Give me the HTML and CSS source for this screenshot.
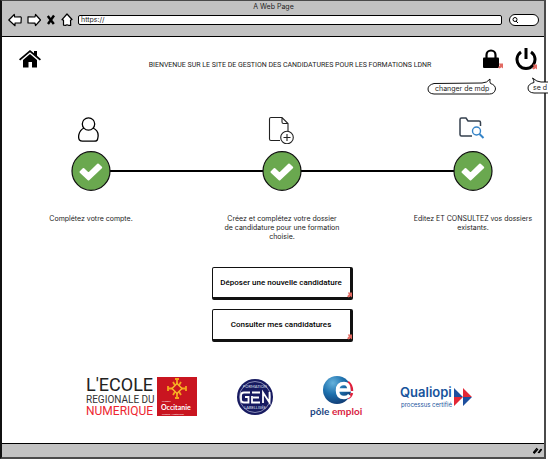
FILE: index.html
```html
<!DOCTYPE html>
<html lang="fr">
<head>
<meta charset="utf-8">
<title>A Web Page</title>
<link rel="stylesheet" href="styles.css">
</head>
<body>
<svg class="defs" aria-hidden="true">
  <symbol id="check" viewBox="0 0 40 40">
    <ellipse cx="20" cy="20" rx="19" ry="19.3" fill="#6aa84f" stroke="#111" stroke-width="1.2"/>
    <path d="M9.500 21l3-3 5 4.700L27 13.500l3.200 3L17.500 28.500z" fill="#fff" stroke="#fff" stroke-width="2" stroke-linejoin="round"/>
  </symbol>
  <symbol id="mark" viewBox="0 0 6 6">
    <path d="M1 0h5v6L4.300 4.500 2 6 0 4.500 2.200 2.300z" fill="#e26a62"/>
  </symbol>
</svg>
<div class="browser">
  <header class="chrome">
    <div class="chrome-title">A Web Page</div>
    <div class="toolbar">
      <button class="nav" aria-label="Précédent"><svg width="14" height="14" viewBox="0 0 14 14"><path d="M.8 7l5.500-5.500.4 2.500 6-.2.600 1-.3 5-6 .2v2.700z"/></svg></button>
      <button class="nav" aria-label="Suivant"><svg width="14" height="14" viewBox="0 0 14 14"><path d="M13.500 7L8.500 1.500 8 4 1 3.800V10l7 .2.500 2.500z"/></svg></button>
      <button class="nav stop" aria-label="Arrêter"><svg width="10" height="14" viewBox="0 0 10 14"><path d="M1.800 3l6 8M8 2.500L2 11"/></svg></button>
      <button class="nav" aria-label="Accueil du navigateur"><svg width="12" height="14" viewBox="0 0 12 14"><path d="M6 1l5 5.500-1.500.8.200 5H7.500L6 11.800l-1.500.6-2-.3v-5L1 6.700z"/></svg></button>
      <input class="address" type="text" aria-label="Adresse" value="https://">
      <label class="search"><svg width="8" height="8" viewBox="0 0 8 8"><circle cx="4" cy="3.500" r="2"/><path d="M5 5l2 2"/></svg><input type="text" aria-label="Rechercher"></label>
    </div>
  </header>

  <main>
    <div class="top">
      <a class="home" href="#" aria-label="Accueil"><svg width="22" height="18" viewBox="0 0 22 18"><path d="M11 4l7 6v7.500h-5V12H9.500v5.500H4V10z"/><path d="M0 9.200L11 0l4 3.300V1h3v4.800l4 3.400-1.200 1.300L11 2.300 1.200 10.500z"/></svg></a>
      <h1>BIENVENUE SUR LE SITE DE GESTION DES CANDIDATURES POUR LES FORMATIONS LDNR</h1>
      <nav class="account">
        <a class="action lock" href="#">
          <svg width="16" height="20" viewBox="0 0 16 20"><path d="M3.500 9V6a4.500 4.500 0 0 1 9 0v3" fill="none" stroke="#000" stroke-width="2.200"/><rect y="8.500" width="16" height="10.500" rx="1"/></svg>
          <svg class="mark" width="5" height="6"><use href="#mark"/></svg>
          <span class="callout"><svg width="70" height="18" viewBox="0 0 70 18"><path d="M7 5.500l48-.5q5 0 8-4-.4 3.500.5 4.500 5 1.500 5 5.500-1 5-6 5H7q-6-.5-6-5 0-4 6-5.500z"/></svg><span>changer de mdp</span></span>
        </a>
        <a class="action power" href="#">
          <svg width="22" height="22" viewBox="0 0 22 22"><path d="M6 4a9 9 0 1 0 10 0M11 0v11" fill="none" stroke="#000" stroke-width="3"/></svg>
          <svg class="mark" width="5" height="6"><use href="#mark"/></svg>
          <span class="callout"><svg width="21" height="18" viewBox="0 0 21 18"><path d="M7 5.500Q7 3 5.500 1 10 5 14 5h52v11H7q-6-.5-6-5 0-4 6-5.500z"/></svg><span>se d</span></span>
        </a>
      </nav>
    </div>

    <ol class="steps">
      <li>
        <svg class="picto" width="26" height="28" viewBox="0 0 26 28"><g fill="none" stroke="#000" stroke-width="1.300"><path d="M6 12C0 15 0 22 1.500 24q1 1.200 3 1.200h11.500q3 0 3.500-1.700Q22 15 15 12"/><circle cx="10.500" cy="8" r="6.200" fill="#fff"/></g></svg>
        <svg class="dot" width="40" height="40"><use href="#check"/></svg>
        <p>Complétez votre compte.</p>
      </li>
      <li>
        <svg class="picto" width="28" height="28" viewBox="0 0 28 28"><g fill="none" stroke="#222" stroke-width="1.100"><path d="M12 24.500H3q-1.500 0-1.500-1.500V3Q1.500 1.500 3 1.500h11l6 6V15M14 1.500V6q0 1.500 1.500 1.500H20"/><circle cx="19" cy="21.500" r="6.300" fill="#fff"/><path d="M19 18v7M15.500 21.500h7"/></g></svg>
        <svg class="dot" width="40" height="40"><use href="#check"/></svg>
        <p>Créez et complétez votre dossier<br>de candidature pour une formation<br>choisie.</p>
      </li>
      <li>
        <svg class="picto" width="30" height="28" viewBox="0 0 30 28"><path d="M14 20H3.500Q2 20 2 18.500v-15Q2 2 3.500 2H8l2 3h11q1.500 0 1.500 1.500V10" fill="none" stroke="#35404e" stroke-width="1.500"/><circle cx="18.500" cy="15" r="4" fill="#fff" stroke="#3584c8" stroke-width="1.400"/><path d="M21.500 18l4 4" stroke="#3584c8" stroke-width="2"/></svg>
        <svg class="dot" width="40" height="40"><use href="#check"/></svg>
        <p>Editez ET CONSULTEZ vos dossiers existants.</p>
      </li>
    </ol>

    <div class="buttons">
      <button>Déposer une nouvelle candidature<svg class="mark" width="5" height="6"><use href="#mark"/></svg></button>
      <button>Consulter mes candidatures<svg class="mark" width="5" height="6"><use href="#mark"/></svg></button>
    </div>

    <div class="logos">
      <svg width="114" height="44" viewBox="0 0 114 44" role="img" aria-label="L'Ecole Régionale du Numérique, Occitanie">
        <g font-family="Roboto, sans-serif">
          <text x="0" y="16" font-size="18" fill="#222">L'ECOLE</text>
          <text x="0" y="28" font-size="10" fill="#333">REGIONALE DU</text>
          <text x="0" y="40" font-size="12" fill="#ed2630">NUMERIQUE</text>
        </g>
        <rect x="71" y="2" width="40" height="39" fill="#c91520"/>
        <path d="M91 4v19M82 13.500h18M87 7l8 13M95 7l-8 13M89 4h4M89 23h4M82 11v5M100 11v5" stroke="#f5a51c" stroke-width="1.800"/>
        <path d="M91 8.500l5 5-5 5-5-5z" fill="#c91520" stroke="#f8b52a" stroke-width="1.500"/>
        <g fill="#fff" font-family="Lato, sans-serif"><text x="76" y="27" font-size="2">La Région</text><text x="75" y="35" font-size="7" font-weight="bold">Occitanie</text><text x="76" y="40" font-size="2">Pyrénées - Méditerranée</text></g>
      </svg>
      <svg width="38" height="44" viewBox="0 0 38 44" role="img" aria-label="Formation GEN labellisée">
        <circle cx="19" cy="22" r="18" fill="#171a60"/><circle cx="19" cy="22" r="15.500" fill="none" stroke="#b9bbd8" stroke-width=".7"/>
        <g fill="none" stroke="#fff" stroke-width="1.800"><path d="M14 17.500H8q-3 0-3 3v4q0 3 3 3h4.500V22H9M24 17.500h-8M17 22.500h6M24 27.500h-8V21M27 28V17.500l6.500 10V17"/></g>
        <g fill="#dfe0f0" font-family="Lato, sans-serif" font-size="4" text-anchor="middle"><text x="19" y="13">FORMATION</text><text x="19" y="34">LABELLISÉE</text></g>
      </svg>
      <svg width="54" height="44" viewBox="0 0 54 44" role="img" aria-label="pôle emploi">
        <defs><radialGradient id="ball" cx=".35" cy=".25" r=".8"><stop offset="0" stop-color="#65b2dc"/><stop offset=".5" stop-color="#1d70ad"/><stop offset="1" stop-color="#103a73"/></radialGradient></defs>
        <circle cx="27" cy="15" r="14" fill="url(#ball)"/>
        <path d="M38 7q4 3 4 9M42 18q-1 4-4 5" fill="none" stroke="#e0203b" stroke-width="2.500"/>
        <path d="M28 15h11Q39 8.500 34 8.500q-6.500 0-6.500 7t6.500 7q3.500 0 5.500-2.500" fill="none" stroke="#fff" stroke-width="3.500"/>
        <g font-family="Lato, sans-serif" font-size="10" font-weight="bold"><text x="0" y="40" fill="#1b4581">pôle</text><text x="22" y="40" fill="#d92342">emploi</text></g>
      </svg>
      <svg width="74" height="44" viewBox="0 0 74 44" role="img" aria-label="Qualiopi processus certifié">
        <g fill="#17549c"><text x="0" y="22" font-family="Inter, sans-serif" font-size="13" font-weight="600">Qualiopi</text><text x="1" y="32" font-family="Inter, sans-serif" font-size="6">processus certifié</text></g>
        <path d="M54 13l9 9h-9zM63 22v9l9-9z" fill="#1d4f9e"/><path d="M54 22h9l-9 9zM63 13v9h9z" fill="#e32735"/>
      </svg>
    </div>
  </main>
  <footer><svg width="9" height="7" viewBox="0 0 9 7"><path d="M0 6l4-5M1 6.500L5 2M5 6l3-4M6 6l3-4" stroke="#000" stroke-width="1.200"/></svg></footer>
</div>
</body>
</html>
```
FILE: styles.css
```css
* { box-sizing: border-box; }
body {
  margin: 0;
  background: #fff;
  color: #222;
  font: 7px/9px "Inter", sans-serif;
}
.defs { position: absolute; width: 0; height: 0; }
svg { display: block; flex: none; }
a { color: inherit; text-decoration: none; }
button, input { font: inherit; color: inherit; }

.browser {
  margin: 0 2px 3px 0;
  border: 2px solid #4a4a4a;
  border-top-width: 1px;
  border-left-color: #111;
}
.chrome {
  height: 36px;
  padding: 1px 5px 0 6px;
  background: #c2c2c2;
  border-bottom: 1px solid #000;
}
.chrome-title { text-align: center; }
.toolbar { display: flex; align-items: center; gap: 5px; height: 17px; }
.nav { padding: 0; border: 0; background: none; }
.nav path { fill: #fff; stroke: #000; stroke-width: 1.2; stroke-linejoin: round; }
.nav.stop path { stroke-width: 2.4; }
.address {
  flex: 1;
  min-width: 0;
  height: 10px;
  padding: 0 2px;
  border: 1px solid #000;
  border-radius: 2px;
  background: #fff;
}
.search {
  display: flex;
  align-items: center;
  width: 30px;
  height: 12px;
  margin-left: 2px;
  padding: 0 1px;
  border: 1px solid #000;
  border-radius: 6px;
  background: #fff;
}
.search svg { fill: none; stroke: #000; }
.search input { width: 16px; height: 8px; padding: 0; border: 0; background: none; outline: 0; }

.top {
  display: flex;
  align-items: center;
  height: 44px;
  padding: 0 7px 0 17px;
}
h1 {
  flex: 1;
  margin: 12px 0 0;
  padding-left: 56px;
  text-align: center;
  font: 7px/9px "Roboto", sans-serif;
}
.account { display: flex; align-items: center; gap: 16px; }
.action { position: relative; }
.action .mark { position: absolute; right: -4px; bottom: 0; }
.power .mark { right: 0; }
.callout { position: absolute; top: 29px; }
.lock .callout { right: 2px; }
.power .callout { left: 12px; }
.callout path { fill: #fff; stroke: #111; }
.callout span { position: absolute; top: 6px; left: 8px; white-space: nowrap; }
.power .callout span { left: 6px; }

.steps {
  position: relative;
  display: flex;
  justify-content: space-between;
  margin: 0;
  padding: 35px 8px 0 26px;
  list-style: none;
}
.steps::before {
  content: "";
  position: absolute;
  top: 89px;
  left: 89px;
  right: 71px;
  height: 2px;
  background: #000;
}
.steps li {
  position: relative;
  display: flex;
  flex-direction: column;
  align-items: center;
  width: 126px;
}
.dot { margin-top: 7px; }
.steps p { margin: 23px 0 0; text-align: center; }

.buttons {
  display: flex;
  flex-direction: column;
  align-items: center;
  gap: 9px;
  margin-top: 26px;
  padding-left: 18px;
}
.buttons button {
  position: relative;
  width: 141px;
  height: 33px;
  padding: 0;
  border: 1px solid #111;
  border-width: 1px 3px 3px 1px;
  border-radius: 2px;
  background: #fff;
  font: 500 8px/12px "Roboto", sans-serif;
  color: #000;
}
.buttons .mark { position: absolute; right: -2px; bottom: -1px; }

.logos {
  display: flex;
  justify-content: space-between;
  padding: 33px 70px 24px 84px;
}
footer {
  display: flex;
  justify-content: flex-end;
  align-items: center;
  height: 14px;
  padding-right: 2px;
  border-top: 1px solid #000;
  background: #c2c2c2;
}
```
